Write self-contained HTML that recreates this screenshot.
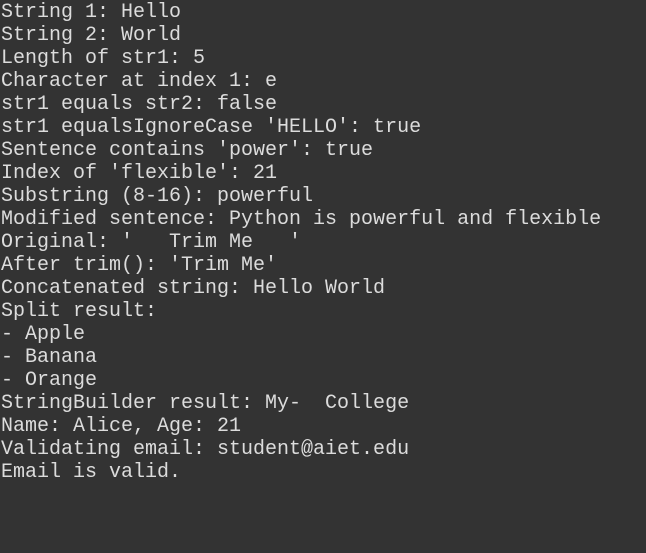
<!DOCTYPE html>
<html><head><style>
html,body{margin:0;padding:0;background:#333333;width:646px;height:553px;overflow:hidden}
pre{margin:0;padding:1px 0 0 1px;font-family:"Liberation Mono",monospace;font-size:20px;line-height:23px;color:#dcdcdc;white-space:pre}
</style></head><body><pre>String 1: Hello
String 2: World
Length of str1: 5
Character at index 1: e
str1 equals str2: false
str1 equalsIgnoreCase 'HELLO': true
Sentence contains 'power': true
Index of 'flexible': 21
Substring (8-16): powerful
Modified sentence: Python is powerful and flexible
Original: '   Trim Me   '
After trim(): 'Trim Me'
Concatenated string: Hello World
Split result:
- Apple
- Banana
- Orange
StringBuilder result: My-  College
Name: Alice, Age: 21
Validating email: student@aiet.edu
Email is valid.</pre></body></html>
